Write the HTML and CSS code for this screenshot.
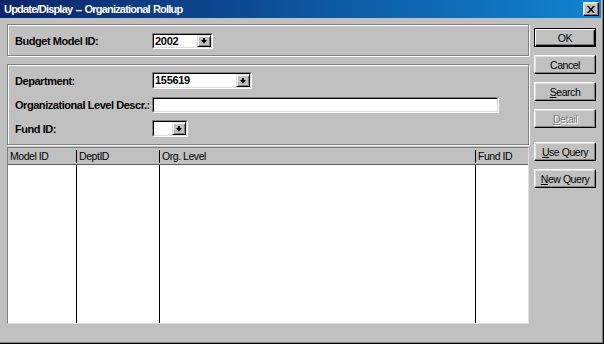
FILE: index.html
```html
<!DOCTYPE html>
<html>
<head>
<meta charset="utf-8">
<link rel="stylesheet" href="styles.css">
</head>
<body>
<div class="window">
  <div class="titlebar">
    <span class="title">Update/Display -- Organizational Rollup</span>
    <span class="close"><svg width="8" height="7" viewBox="0 0 8 7"><path d="M0 0h2l2 2.5 2-2.5h2l-3 3.5 3 3.5h-2l-2-2.5-2 2.5h-2l3-3.5z" fill="#000"/></svg></span>
  </div>
  <div class="content">
    <div class="main">
      <div class="group g1">
        <div class="row">
          <span class="lbl">Budget Model ID:</span>
          <div class="sunken combo c-budget">
            <div class="sunken-in">
              <span class="field">2002</span>
              <span class="dd"><svg width="6" height="6" viewBox="0 0 6 6"><rect x="2" y="0" width="2" height="2" fill="#000"/><polygon points="0,2 6,2 3,5.5" fill="#000"/></svg></span>
            </div>
          </div>
        </div>
      </div>
      <div class="group g2">
        <div class="row">
          <span class="lbl">Department:</span>
          <div class="sunken combo c-dept">
            <div class="sunken-in">
              <span class="field">155619</span>
              <span class="dd"><svg width="6" height="6" viewBox="0 0 6 6"><rect x="2" y="0" width="2" height="2" fill="#000"/><polygon points="0,2 6,2 3,5.5" fill="#000"/></svg></span>
            </div>
          </div>
        </div>
        <div class="row">
          <span class="lbl">Organizational Level Descr.:</span>
          <div class="sunken combo c-org">
            <div class="sunken-in">
              <span class="field"></span>
            </div>
          </div>
        </div>
        <div class="row">
          <span class="lbl">Fund ID:</span>
          <div class="sunken combo c-fund">
            <div class="sunken-in">
              <span class="field"></span>
              <span class="dd"><svg width="6" height="6" viewBox="0 0 6 6"><rect x="2" y="0" width="2" height="2" fill="#000"/><polygon points="0,2 6,2 3,5.5" fill="#000"/></svg></span>
            </div>
          </div>
        </div>
      </div>
      <div class="list">
        <div class="cols head">
          <span class="hc">Model ID</span>
          <span class="hc sep">DeptID</span>
          <span class="hc sep">Org. Level</span>
          <span class="hc sep">Fund ID</span>
        </div>
        <div class="cols lbody">
          <span class="bc"></span>
          <span class="bc sep"></span>
          <span class="bc sep"></span>
          <span class="bc sep"></span>
        </div>
      </div>
    </div>
    <div class="buttons">
      <div class="btn default"><span class="btn-in">OK</span></div>
      <div class="btn"><span class="btn-in">Cancel</span></div>
      <div class="btn"><span class="btn-in"><u>S</u>earch</span></div>
      <div class="btn disabled"><span class="btn-in"><u>D</u>etail</span></div>
      <div class="btn spaced"><span class="btn-in"><u>U</u>se Query</span></div>
      <div class="btn"><span class="btn-in"><u>N</u>ew Query</span></div>
    </div>
  </div>
</div>
</body>
</html>
```
FILE: styles.css
```css
* { box-sizing: border-box; }
html, body { margin: 0; padding: 0; }
body {
  width: 604px;
  height: 344px;
  overflow: hidden;
  font-family: "Liberation Sans", Arial, sans-serif;
  font-size: 10.5px;
  letter-spacing: -0.45px;
  color: #000;
  background: #c0c0c0;
}
.window {
  width: 604px;
  height: 344px;
  background: #c0c0c0;
  border-right: 1px solid #000;
  border-bottom: 1px solid #000;
  box-shadow: inset -1px -1px #808080;
  display: flex;
  flex-direction: column;
}
.titlebar {
  height: 18px;
  margin-right: 2px;
  background: linear-gradient(to right, #0a246a, #1084d0);
  display: flex;
  align-items: center;
  justify-content: space-between;
  padding: 0 2px 0 4px;
}
.title {
  color: #fff;
  font-weight: bold;
  font-size: 11px;
  letter-spacing: -0.8px;
  word-spacing: 1px;
  white-space: nowrap;
}
.close {
  width: 16px;
  height: 14px;
  background: #c0c0c0;
  border: 1px solid;
  border-color: #fff #000 #000 #fff;
  box-shadow: inset -1px -1px #808080, inset 1px 1px #dfdfdf;
  display: flex;
  align-items: center;
  justify-content: center;
}
.close svg { display: block; }
.content {
  display: flex;
  padding: 6px 0 0 7px;
  gap: 5px;
}
.main {
  width: 522px;
  display: flex;
  flex-direction: column;
}
.group {
  border: 1px solid #808080;
  box-shadow: inset 1px 1px #fff, 1px 1px #fff;
  padding-left: 7px;
  display: flex;
  flex-direction: column;
}
.g1 {
  height: 32px;
  padding-top: 7px;
}
.g2 {
  margin-top: 8px;
  height: 81px;
  padding-top: 7px;
  gap: 7px;
}
.row {
  display: flex;
  align-items: center;
  height: 17px;
}
.lbl {
  width: 137px;
  font-size: 11px;
  font-weight: bold;
  white-space: nowrap;
  letter-spacing: -0.45px;
}
.sunken {
  border: 1px solid;
  border-color: #808080 #fff #fff #808080;
  height: 17px;
}
.sunken-in {
  border: 1px solid;
  border-color: #000 #dfdfdf #dfdfdf #000;
  height: 100%;
  display: flex;
  background: #fff;
}
.field {
  flex: 1;
  background: #fff;
  font-size: 11px;
  font-weight: bold;
  letter-spacing: -0.3px;
  padding-left: 1px;
  line-height: 13px;
}
.dd {
  width: 14px;
  height: 100%;
  background: #c0c0c0;
  border: 1px solid;
  border-color: #dfdfdf #000 #000 #dfdfdf;
  box-shadow: inset 1px 1px #fff, inset -1px -1px #808080;
  display: flex;
  align-items: center;
  justify-content: center;
}
.dd svg { display: block; }
.c-budget { width: 61px; height: 16px; }
.c-dept { width: 100px; }
.c-org { width: 347px; height: 16px; }
.c-fund { width: 36px; }
.list {
  margin-top: 2px;
  height: 177px;
  border: 1px solid;
  border-color: #808080 #dfdfdf #dfdfdf #808080;
  display: flex;
  flex-direction: column;
}
.cols {
  display: grid;
  grid-template-columns: 68px 83px 316px 1fr;
}
.head {
  height: 17px;
  background: #c0c0c0;
  border-bottom: 1px solid #606060;
}
.hc {
  padding: 1px 0 0 2px;
  line-height: 14px;
  white-space: nowrap;
}
.hc.sep { border-left: 1px solid #000; margin: 2px 0 1px 0; padding-top: 0; line-height: 13px; }
.lbody {
  flex: 1;
  background: #fff;
}
.bc.sep { border-left: 1px solid #000; }
.buttons {
  width: 62px;
  padding-top: 4px;
  display: flex;
  flex-direction: column;
  gap: 8px;
}
.btn {
  height: 19px;
  border: 1px solid;
  border-color: #fff #000 #000 #fff;
  box-shadow: inset -1px -1px #808080, inset 1px 1px #dfdfdf;
  display: flex;
  align-items: center;
  justify-content: center;
}
.btn.default {
  border: 1px solid #000;
  box-shadow: inset 1px 1px #fff, inset -1px -1px #000, inset -2px -2px #808080;
}
.btn-in { white-space: nowrap; }
.btn.disabled .btn-in {
  color: #808080;
  text-shadow: 1px 1px #fff;
}
.btn.spaced { margin-top: 6px; }
```
